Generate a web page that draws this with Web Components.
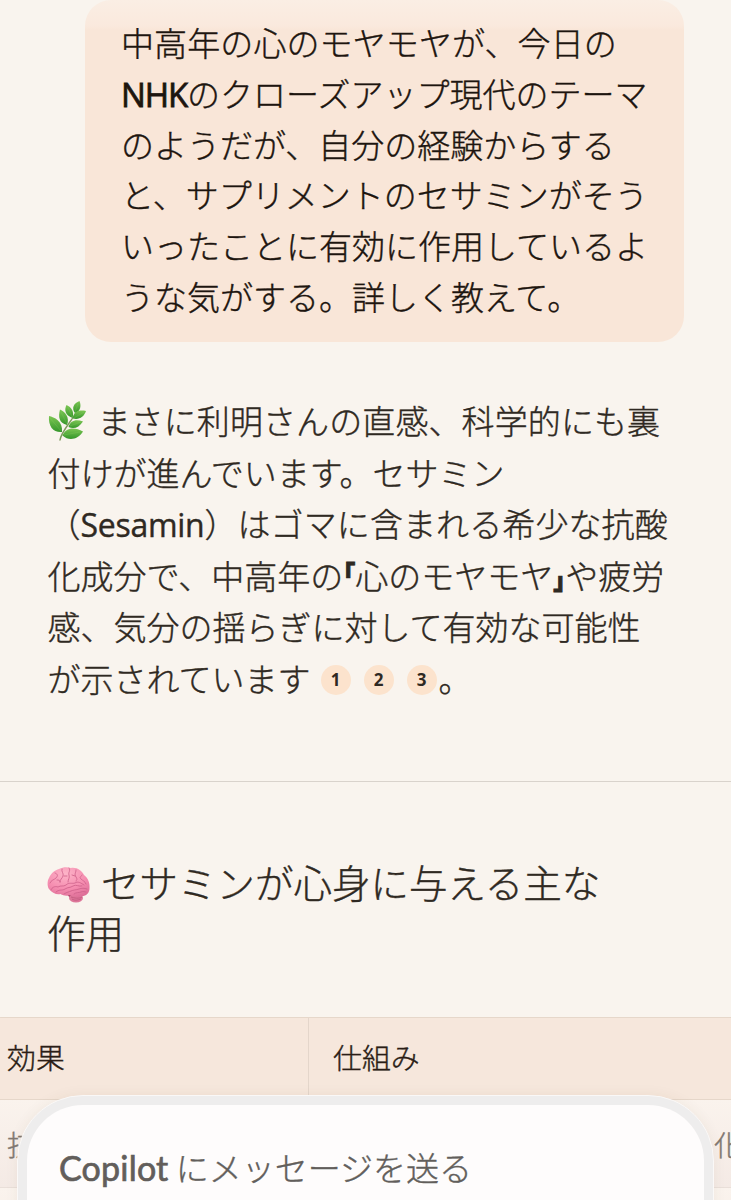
<!DOCTYPE html>
<html lang="ja">
<head>
<meta charset="UTF-8">
<meta name="viewport" content="width=device-width, initial-scale=1">
<title>Copilot</title>
<style>
  html, body {
    margin: 0;
    height: 100%;
    overflow: hidden;
  }
  body {
    background: #f9f4ee;
    font-family: "Noto Sans CJK JP", sans-serif;
    font-weight: 300;
    font-size: 33px;
    color: #2f2922;
    text-spacing-trim: space-all;
    -webkit-text-stroke: 0.4px currentColor;
  }
</style>
</head>
<body>
<chat-app></chat-app>
<script>
class LatinText extends HTMLElement {
  connectedCallback() {
    this.attachShadow({ mode: 'open' });
    this.shadowRoot.innerHTML = `<style>
        :host {
          display: inline;
          font-family: "Open Sans", "Noto Sans", sans-serif;
          font-weight: 500;
        }
        :host([face="round"]) {
          font-family: Lato, sans-serif;
          font-weight: 400;
        }
      </style><slot></slot>`;
  }
}
customElements.define('latin-text', LatinText);

class TextLine extends HTMLElement {
  connectedCallback() {
    this.attachShadow({ mode: 'open' });
    this.shadowRoot.innerHTML = `<style>
        :host {
          display: block;
          height: var(--line, 50.8px);
          line-height: var(--line, 50.8px);
          white-space: nowrap;
        }
      </style><slot></slot>`;
  }
}
customElements.define('text-line', TextLine);

class UserMessage extends HTMLElement {
  connectedCallback() {
    this.attachShadow({ mode: 'open' });
    this.shadowRoot.innerHTML = `
      <style>
        :host {
          display: block;
          box-sizing: border-box;
          width: 599px;
          height: 342px;
          margin-left: 85px;
          padding: 17px 36px 0;
          border-radius: 26px;
          background: linear-gradient(#faeee4 0, #fae9dd 26px, #f9e6d8 30px);
          color: #1d150f;
        }
      </style>
      <slot></slot>
    `;
  }
}
customElements.define('user-message', UserMessage);

class CornerQuote extends HTMLElement {
  connectedCallback() {
    this.attachShadow({ mode: 'open' });
    this.shadowRoot.innerHTML = `<style>
        :host {
          display: inline-block;
          width: 12px;
          font-size: 24px;
          font-weight: 900;
          font-feature-settings: "halt";
          line-height: 30px;
          vertical-align: 6px;
          -webkit-text-stroke: 0.9px currentColor;
        }
        :host([side="close"]) {
          vertical-align: 0;
        }
      </style><slot></slot>`;
  }
}
customElements.define('corner-quote', CornerQuote);

class CitationBadge extends HTMLElement {
  connectedCallback() {
    this.attachShadow({ mode: 'open' });
    this.shadowRoot.innerHTML = `<style>
        :host {
          display: inline-flex;
          align-items: center;
          justify-content: center;
          width: 30px;
          height: 30px;
          margin-right: 13px;
          border-radius: 50%;
          background: #fce3cd;
          font: 700 17px/30px "Open Sans", sans-serif;
          -webkit-text-stroke: 0;
          vertical-align: 6px;
        }
        :host(:first-of-type) {
          margin-left: 10px;
        }
        :host(:last-of-type) {
          margin-right: 2px;
        }
      </style><slot></slot>`;
  }
}
customElements.define('citation-badge', CitationBadge);

class HerbIcon extends HTMLElement {
  connectedCallback() {
    this.attachShadow({ mode: 'open' });
    this.shadowRoot.innerHTML = `<style>
        :host {
          display: inline-block;
          width: 38px;
          height: 40px;
          margin-right: 12px;
          vertical-align: -7px;
        }
        svg { display: block; }
      </style>
      <svg width="38" height="40" viewBox="0 0 38 40">
        <defs>
          <linearGradient id="leaf" x1="0" y1="0" x2="0" y2="1">
            <stop offset="0" stop-color="#7cc653"/>
            <stop offset="1" stop-color="#35962b"/>
          </linearGradient>
        </defs>
        <path d="M12 39C13 31 22 22 30 9" fill="none" stroke="#7d9a5c" stroke-width="1.4" stroke-linecap="round"/>
        <g fill="url(#leaf)">
          <path d="M14 31C6 32 0 26 1 15c5 1 14 5 13 16Z"/>
          <path d="M19 24C11 22 10 16 12 8.500c5 2 10 8 7 15.500Z"/>
          <path d="M24.500 17C17 14 16 9 18.500 4c5 2 8 7 6 13Z"/>
          <path d="M27 12C23 7 26 2 31.500 0c2 5 1 10-4.500 12Z"/>
          <path d="M25 17.500c0-7 6-9 13-7.500-2 6-7 9-13 7.500Z"/>
          <path d="M20.500 26c2-7 8-8 14.500-5.500-4 6-9 8-14.500 5.500Z"/>
          <path d="M14.500 34.500c3-8 12-9 20.500-4-5 8-14 10-20.500 4Z"/>
        </g>
        <g fill="none" stroke="#9ad96e" stroke-width=".5" opacity=".4">
          <path d="M2 17l11 13M13 11l6 12M20 6l4 10M30 3l-3 8M36 11l-10 6M33 21l-11 4M32 31l-16 3"/>
        </g>
      </svg>`;
  }
}
customElements.define('herb-icon', HerbIcon);

class BrainIcon extends HTMLElement {
  connectedCallback() {
    this.attachShadow({ mode: 'open' });
    this.shadowRoot.innerHTML = `<style>
        :host {
          display: inline-block;
          width: 43px;
          height: 36px;
          margin-right: 11px;
          vertical-align: -5px;
        }
        svg { display: block; }
      </style>
      <svg width="43" height="36" viewBox="0 0 43 36">
        <defs>
          <radialGradient id="pink" cx=".42" cy=".22" r=".85">
            <stop offset="0" stop-color="#fdb4c8"/>
            <stop offset=".6" stop-color="#f58db0"/>
            <stop offset="1" stop-color="#de6f98"/>
          </radialGradient>
        </defs>
        <path d="M18 26c3 2 5 5 9 8l4-4-5-5z" fill="#a03d62"/>
        <ellipse cx="29" cy="31" rx="7" ry="4.500" fill="#dd7699"/>
        <path d="M3 23C0 21 0 14 2 11 4 6 8 3 12 2c4-2 8-2 12-1 6-1 11 3 13 7 4 3 6 8 5.500 13 0 4-2 7-6 8-4 1-9 1-13-1-3 1-7 1-10-1-4 1-8-1-10.500-4Z" fill="url(#pink)"/>
        <g fill="none" stroke="#cd5f89" stroke-width=".8" stroke-linecap="round" stroke-linejoin="round">
          <path d="M4 23c1-3 4-4 7-3 3-2 5 0 8-2 3-3 6-1 9-2 3-2 6 0 9 2"/>
          <path d="M8 6c3 1 3 3 1 5s-5 2-6 5M15 2c-1 3 2 4 1 7s-3 3-3 6M22 1c2 3-1 4 0 7s-1 4-1 7M29 3c0 3-2 4 0 7s0 3 0 4M35 8c-1 2-3 2-1 4s4 2 5 5M10 13c2 0 3 0 3 2M17 9h3M25 8l3 1"/>
          <path d="M9 25c3-3 6-1 9-3s5-1 8-3 6 1 9 0M17 27c3-2 5-2 7-3s5-1 8-2 5-1 8 0M27 27c2-2 5-1 7-2s4 0 5 0"/>
        </g>
        <path d="M24 30c3 1 8 2 11 0M25 32c3 2 6 1 9 0" fill="none" stroke="#bd5179" stroke-width=".7"/>
      </svg>`;
  }
}
customElements.define('brain-icon', BrainIcon);

class AssistantMessage extends HTMLElement {
  connectedCallback() {
    this.attachShadow({ mode: 'open' });
    this.shadowRoot.innerHTML = `
      <style>
        :host {
          display: block;
          --line: 51.6px;
          height: 386px;
          padding: 53px 0 0 47.500px;
          border-bottom: 1px solid #d9d3cc;
        }
      </style>
      <slot></slot>
    `;
  }
}
customElements.define('assistant-message', AssistantMessage);

class SectionHeading extends HTMLElement {
  connectedCallback() {
    this.attachShadow({ mode: 'open' });
    this.shadowRoot.innerHTML = `
      <style>
        :host {
          display: block;
          --line: 50px;
          height: 161px;
          padding: 74px 0 0 47px;
          font-size: 38.500px;
        }
        h2 {
          margin: 0;
          font: inherit;
        }
      </style>
      <h2><slot></slot></h2>
    `;
  }
}
customElements.define('section-heading', SectionHeading);

class EffectTable extends HTMLElement {
  connectedCallback() {
    this.attachShadow({ mode: 'open' });
    this.shadowRoot.innerHTML = `
      <style>
        :host {
          display: block;
          width: 780px;
          margin-left: -17px;
          border: 1px solid #e6d7ca;
          border-radius: 18px 0 0 0;
          overflow: hidden;
          font-size: 28.9px;
        }
        .row {
          display: grid;
          grid-template-columns: 325px 1fr;
          height: 87px;
          border-bottom: 1px solid #e9dfd9;
          background: linear-gradient(#faf3ed, #f4eae5);
          color: #817871;
          line-height: 87px;
        }
        .head {
          height: 81px;
          border-color: #e6d7ca;
          background: #f6e7dc;
          color: #2a1d16;
          line-height: 77px;
        }
        .row > div {
          box-sizing: border-box;
          padding-left: 23px;
        }
        .row > div + div {
          padding-left: 24px;
        }
        .head > div:first-child {
          border-right: 1px solid #e4d6cb;
        }
        .row > .tail {
          padding-left: 405px;
        }
      </style>
      <div class="row head"><div>効果</div><div>仕組み</div></div>
      <div class="row"><div>抗</div><div class="tail">化</div></div>
      <div class="row"></div>
    `;
  }
}
customElements.define('effect-table', EffectTable);

class MessageComposer extends HTMLElement {
  connectedCallback() {
    this.attachShadow({ mode: 'open' });
    this.shadowRoot.innerHTML = `
      <style>
        /* floats over the conversation and runs past the bottom edge */
        :host {
          position: absolute;
          left: 17px;
          right: 17px;
          bottom: -60px;
          height: 165px;
          box-sizing: border-box;
          border: 1px solid #faf8f7;
          border-radius: 66px 66px 0 0;
          background: #eeeded;
          padding: 9px 9px 0;
          box-shadow: 0 0 14px rgba(90, 60, 40, 0.06);
          color: #625e5b;
        }
        .field {
          box-sizing: border-box;
          height: 160px;
          padding: 35px 0 0 32px;
          border-radius: 56px 56px 0 0;
          background: #fefcfc;
          line-height: 54px;
          white-space: nowrap;
        }
      </style>
      <div class="field"><slot></slot></div>
    `;
  }
}
customElements.define('message-composer', MessageComposer);

class ChatApp extends HTMLElement {
  connectedCallback() {
    this.attachShadow({ mode: 'open' });
    this.shadowRoot.innerHTML = `
      <style>
        :host {
          display: block;
          position: relative;
          height: 1200px;
          overflow: hidden;
        }
        .nhk { letter-spacing: -1.1px; -webkit-text-stroke: 0.8px currentColor; }
        .sesamin { font-size: 32px; letter-spacing: -0.3px; }
        .copilot {
          font-size: 34px;
          letter-spacing: 0.2px;
          -webkit-text-stroke: 0.7px currentColor;
        }
        .placeholder { letter-spacing: 0; }
        .spread { letter-spacing: 0.1px; }
      </style>
      <user-message>
        <text-line class="spread">中高年の心のモヤモヤが、今日の</text-line>
        <text-line><latin-text class="nhk">NHK</latin-text>のクローズアップ現代のテーマ</text-line>
        <text-line>のようだが、自分の経験からする</text-line>
        <text-line>と、サプリメントのセサミンがそう</text-line>
        <text-line>いったことに有効に作用しているよ</text-line>
        <text-line>うな気がする。詳しく教えて。</text-line>
      </user-message>
      <assistant-message>
        <text-line class="spread"><herb-icon></herb-icon>まさに利明さんの直感、科学的にも裏</text-line>
        <text-line>付けが進んでいます。セサミン</text-line>
        <text-line class="spread">（<latin-text class="sesamin">Sesamin</latin-text>）はゴマに含まれる希少な抗酸</text-line>
        <text-line>化成分で、中高年の<corner-quote>「</corner-quote>心のモヤモヤ<corner-quote side="close">」</corner-quote>や疲労</text-line>
        <text-line>感、気分の揺らぎに対して有効な可能性</text-line>
        <text-line>が示されています<citation-badge>1</citation-badge><citation-badge>2</citation-badge><citation-badge>3</citation-badge>。</text-line>
      </assistant-message>
      <section-heading>
        <text-line><brain-icon></brain-icon>セサミンが心身に与える主な</text-line>
        <text-line>作用</text-line>
      </section-heading>
      <effect-table></effect-table>
      <message-composer><latin-text class="copilot" face="round">Copilot</latin-text><span class="placeholder"> にメッセージを送る</span></message-composer>
    `;
  }
}
customElements.define('chat-app', ChatApp);
</script>
</body>
</html>
